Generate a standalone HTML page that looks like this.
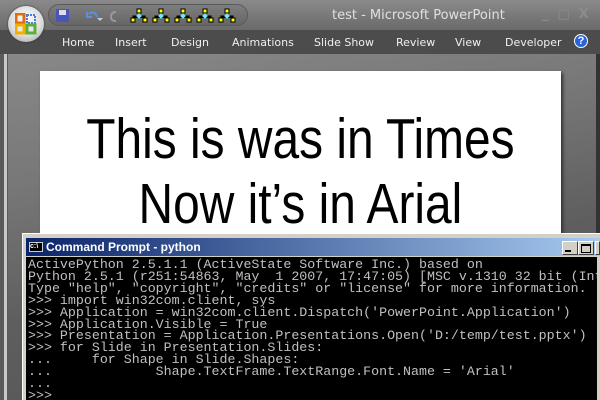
<!DOCTYPE html>
<html><head><style>
*{margin:0;padding:0;box-sizing:border-box}
html,body{width:600px;height:400px;overflow:hidden}
body{position:relative;background:#6e6e6e;font-family:"Liberation Sans",sans-serif}
.title{position:absolute;left:0;top:0;width:600px;height:30px;background:linear-gradient(#8a8a8a,#6a6a6a);}
.qat{position:absolute;left:48px;top:4px;width:200px;height:22px;border-radius:11px;background:linear-gradient(#7e7e7e,#666);border:1px solid #5a5a5a}
.orb{position:absolute;left:8px;top:6px;width:36px;height:36px;border-radius:50%;background:radial-gradient(circle at 50% 40%,#fff,#ddd 55%,#999);box-shadow:0 0 2px #333}
.tabs{position:absolute;left:0;top:30px;width:600px;height:24px;background:#4c4c4c}
.tab{position:absolute;top:36px;color:#f0f0f0;font-size:11px;font-family:"DejaVu Sans",sans-serif}
.work{position:absolute;left:8px;top:54px;width:588px;height:346px;background:linear-gradient(170deg,#888 0%,#777 30%,#5e5e5e 60%,#555)}
.slide{position:absolute;left:40px;top:71px;width:521px;height:200px;background:#fff;box-shadow:2px 2px 3px #333}
.st{position:absolute;left:40px;width:521px;text-align:center;font-size:57px;line-height:65px;color:#000;transform:scaleX(0.84);transform-origin:260px 0}
.con{position:absolute;left:22px;top:233px;width:578px;height:167px;background:#d4d0c8;border-left:1px solid #fff;border-top:1px solid #fff}
.ct{position:absolute;left:26px;top:238px;width:574px;height:18px;background:linear-gradient(90deg,#0a246a,#a6caf0);color:#fff;font:bold 12px "Liberation Sans",sans-serif;padding:2px 0 0 20px}
.cb{position:absolute;top:241px;width:16px;height:14px;background:#d4d0c8;border:1px solid;border-color:#fff #404040 #404040 #fff}
.term{position:absolute;left:26px;top:257px;width:571px;height:143px;background:#000;color:#c0c0c0;font:13.3px/11.9px "Liberation Mono",monospace;white-space:pre;padding:2px 0 0 2px;overflow:hidden}
</style></head><body>
<div class="title"></div>
<div class="qat"></div>
<svg style="position:absolute;left:56px;top:8px" width="200" height="16">
<rect x="0" y="1" width="13" height="13" fill="#4a55b8"/><rect x="3" y="2" width="7" height="5" fill="#dde"/>
<path d="M33 6 q6 -4 8 3 M31 4 v5 h5" stroke="#5b8ee6" stroke-width="2" fill="none"/>
<path d="M41 10 l3 3 l3-3z" fill="#ccc"/>
<path d="M60 4 q-5 0 -5 5 q0 4 5 4" stroke="#999" stroke-width="2" fill="none"/>
<g id="o"><rect x="81" y="1" width="4" height="4" fill="#ff0" stroke="#000"/><rect x="75" y="10" width="4" height="4" fill="#ff0" stroke="#000"/><rect x="87" y="10" width="4" height="4" fill="#ff0" stroke="#000"/><path d="M83 5v3M77 10V8h12v2" stroke="#000"/><rect x="81" y="6" width="4" height="4" fill="#6ef" transform="rotate(45 83 8)"/></g>
<use href="#o" x="22"/><use href="#o" x="44"/><use href="#o" x="66"/><use href="#o" x="88"/>
<path d="M253 8h6M253 10l3 3 3-3z" stroke="#ccc" fill="#ccc"/>
</svg>
<div style="position:absolute;left:332px;top:8px;color:#e0e0e0;font:13px 'DejaVu Sans',sans-serif">test - Microsoft PowerPoint</div>
<div style="position:absolute;left:542px;top:7px;color:#8c8c8c;font:bold 13px 'DejaVu Sans',sans-serif;letter-spacing:9px">_□X</div>
<div class="tabs"></div>
<div class="orb"></div>
<svg style="position:absolute;left:15px;top:13px" width="22" height="22"><rect x="1" y="1" width="8" height="9" fill="none" stroke="#e36c0a" stroke-width="3"/><rect x="12" y="2" width="8" height="8" fill="none" stroke="#4a7ed6" stroke-width="2" stroke-dasharray="2 1"/><rect x="1" y="12" width="8" height="8" fill="none" stroke="#f0b000" stroke-width="3"/><rect x="12" y="12" width="8" height="8" fill="none" stroke="#5ab03a" stroke-width="3"/></svg>
<div class="tab" style="left:62px">Home</div>
<div class="tab" style="left:115px">Insert</div>
<div class="tab" style="left:171px">Design</div>
<div class="tab" style="left:232px">Animations</div>
<div class="tab" style="left:314px">Slide Show</div>
<div class="tab" style="left:396px">Review</div>
<div class="tab" style="left:455px">View</div>
<div class="tab" style="left:505px">Developer</div>
<div style="position:absolute;left:574px;top:34px;width:14px;height:14px;border-radius:50%;background:#2a62d8;border:1px solid #fff;color:#fff;font:bold 11px/12px 'Liberation Sans';text-align:center">?</div>
<div class="work"></div>
<div style="position:absolute;left:0;top:54px;width:8px;height:346px;background:#5a5a5a"></div>
<div style="position:absolute;left:4px;top:54px;width:3px;height:346px;background:#c8c8c8"></div>
<div style="position:absolute;left:596px;top:54px;width:4px;height:180px;background:#333"></div>
<div class="slide"></div>
<div class="st" style="top:107px">This is was in Times</div>
<div class="st" style="top:172px">Now it’s in Arial</div>
<div class="con"></div>
<div class="ct">Command Prompt - python</div>
<div style="position:absolute;left:29px;top:242px;width:14px;height:10px;background:#000;border:1px solid #ccc;color:#fff;font:bold 7px/8px 'Liberation Sans'">c:\</div>
<div class="cb" style="left:562px"></div><div class="cb" style="left:578px"></div><div class="cb" style="left:595px;width:5px"></div>
<div style="position:absolute;left:565px;top:250px;width:6px;height:2px;background:#000"></div>
<div style="position:absolute;left:581px;top:244px;width:10px;height:9px;border:1px solid #000;border-top-width:2px"></div>
<div class="term">ActivePython 2.5.1.1 (ActiveState Software Inc.) based on
Python 2.5.1 (r251:54863, May  1 2007, 17:47:05) [MSC v.1310 32 bit (Intel)]
Type "help", "copyright", "credits" or "license" for more information.
&gt;&gt;&gt; import win32com.client, sys
&gt;&gt;&gt; Application = win32com.client.Dispatch('PowerPoint.Application')
&gt;&gt;&gt; Application.Visible = True
&gt;&gt;&gt; Presentation = Application.Presentations.Open('D:/temp/test.pptx')
&gt;&gt;&gt; for Slide in Presentation.Slides:
...     for Shape in Slide.Shapes:
...             Shape.TextFrame.TextRange.Font.Name = 'Arial'
...
&gt;&gt;&gt;</div>
<div style="position:absolute;left:597px;top:257px;width:3px;height:143px;background:#d4d0c8"></div>
</body></html>
